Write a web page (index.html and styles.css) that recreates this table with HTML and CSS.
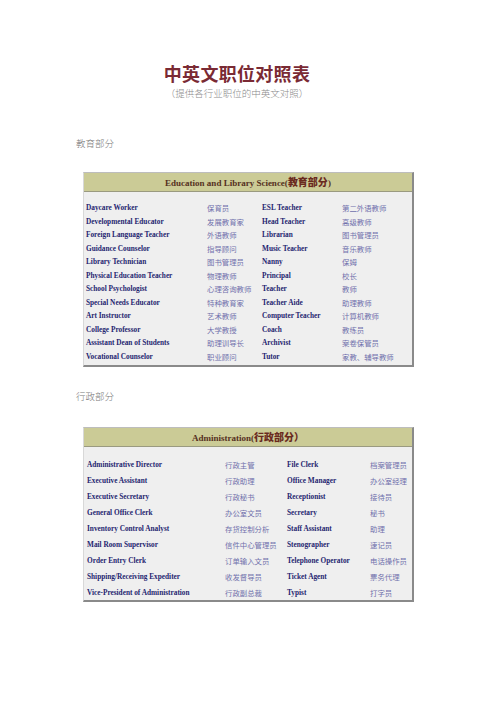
FILE: index.html
```html
<!DOCTYPE html>
<html lang="zh">
<head>
<meta charset="utf-8">
<title>中英文职位对照表</title>
<link rel="stylesheet" href="styles.css">
</head>
<body>
<div class="page">
  <h1 class="title">中英文职位对照表</h1>
  <p class="subtitle">（提供各行业职位的中英文对照）</p>

  <p class="section">教育部分</p>
  <div class="table t1">
    <div class="thead">Education and Library Science(<span class="cn-h">教育部分</span>)</div>
    <div class="tbody">
      <span class="en">Daycare Worker</span><span class="cn">保育员</span><span class="en">ESL Teacher</span><span class="cn">第二外语教师</span>
      <span class="en">Developmental Educator</span><span class="cn">发展教育家</span><span class="en">Head Teacher</span><span class="cn">高级教师</span>
      <span class="en">Foreign Language Teacher</span><span class="cn">外语教师</span><span class="en">Librarian</span><span class="cn">图书管理员</span>
      <span class="en">Guidance Counselor</span><span class="cn">指导顾问</span><span class="en">Music Teacher</span><span class="cn">音乐教师</span>
      <span class="en">Library Technician</span><span class="cn">图书管理员</span><span class="en">Nanny</span><span class="cn">保姆</span>
      <span class="en">Physical Education Teacher</span><span class="cn">物理教师</span><span class="en">Principal</span><span class="cn">校长</span>
      <span class="en">School Psychologist</span><span class="cn">心理咨询教师</span><span class="en">Teacher</span><span class="cn">教师</span>
      <span class="en">Special Needs Educator</span><span class="cn">特种教育家</span><span class="en">Teacher Aide</span><span class="cn">助理教师</span>
      <span class="en">Art Instructor</span><span class="cn">艺术教师</span><span class="en">Computer Teacher</span><span class="cn">计算机教师</span>
      <span class="en">College Professor</span><span class="cn">大学教授</span><span class="en">Coach</span><span class="cn">教练员</span>
      <span class="en">Assistant Dean of Students</span><span class="cn">助理训导长</span><span class="en">Archivist</span><span class="cn">案卷保管员</span>
      <span class="en">Vocational Counselor</span><span class="cn">职业顾问</span><span class="en">Tutor</span><span class="cn">家教、辅导教师</span>
    </div>
  </div>

  <p class="section sec2">行政部分</p>
  <div class="table t2">
    <div class="thead">Administration(<span class="cn-h">行政部分）</span></div>
    <div class="tbody">
      <span class="en">Administrative Director</span><span class="cn">行政主管</span><span class="en">File Clerk</span><span class="cn">档案管理员</span>
      <span class="en">Executive Assistant</span><span class="cn">行政助理</span><span class="en">Office Manager</span><span class="cn">办公室经理</span>
      <span class="en">Executive Secretary</span><span class="cn">行政秘书</span><span class="en">Receptionist</span><span class="cn">接待员</span>
      <span class="en">General Office Clerk</span><span class="cn">办公室文员</span><span class="en">Secretary</span><span class="cn">秘书</span>
      <span class="en">Inventory Control Analyst</span><span class="cn">存货控制分析</span><span class="en">Staff Assistant</span><span class="cn">助理</span>
      <span class="en">Mail Room Supervisor</span><span class="cn">信件中心管理员</span><span class="en">Stenographer</span><span class="cn">速记员</span>
      <span class="en">Order Entry Clerk</span><span class="cn">订单输入文员</span><span class="en">Telephone Operator</span><span class="cn">电话操作员</span>
      <span class="en">Shipping/Receiving Expediter</span><span class="cn">收发督导员</span><span class="en">Ticket Agent</span><span class="cn">票务代理</span>
      <span class="en">Vice-President of Administration</span><span class="cn">行政副总裁</span><span class="en">Typist</span><span class="cn">打字员</span>
    </div>
  </div>
</div>
</body>
</html>
```

FILE: styles.css
```css
html, body {
  margin: 0;
  padding: 0;
  background: #ffffff;
}
body {
  font-family: "Liberation Serif", "Noto Sans CJK SC", serif;
}
.page {
  width: 496px;
  padding-top: 63px;
}
.title {
  margin: 0;
  padding-right: 22px;
  text-align: center;
  font-family: "Noto Sans CJK SC", sans-serif;
  font-weight: 700;
  font-size: 18px;
  line-height: 20px;
  color: #7a2a34;
  letter-spacing: 0.3px;
}
.subtitle {
  margin: 4px 0 0;
  padding-right: 22px;
  text-align: center;
  font-family: "Noto Sans CJK SC", sans-serif;
  font-weight: 300;
  font-size: 9.5px;
  line-height: 12px;
  color: #8a8a8a;
}
.section {
  margin: 38px 0 0 76px;
  font-family: "Noto Sans CJK SC", sans-serif;
  font-weight: 300;
  font-size: 9.5px;
  line-height: 12px;
  color: #777777;
}
.sec2 {
  margin-top: 23px;
}
.table {
  margin: 23px 0 0 83px;
  width: 331px;
  box-sizing: border-box;
  border-top: 1px solid #bdbdbd;
  border-left: 1px solid #d8d8d8;
  border-right: 2px solid #8a8a8a;
  border-bottom: 2px solid #8a8a8a;
  background: #efefef;
}
.t2 {
  margin-top: 25px;
}
.thead {
  height: 18px;
  line-height: 18px;
  background: #cbcb96;
  border-bottom: 1px solid #9a9a80;
  text-align: center;
  font-family: "Liberation Serif", serif;
  font-weight: 700;
  font-size: 9px;
  color: #55301e;
}
.cn-h {
  font-family: "Noto Sans CJK SC", sans-serif;
  font-weight: 900;
  font-size: 10px;
  color: #6a2a1e;
}
.tbody {
  display: grid;
  padding: 9px 0 2px 2px;
}
.t1 .tbody {
  grid-template-columns: 121px 55px 80px 1fr;
  grid-auto-rows: 13.5px;
}
.t2 .tbody {
  grid-template-columns: 138px 62px 83px 1fr;
  grid-auto-rows: 16px;
  padding: 9px 0 0 3px;
}
.en {
  font-family: "Liberation Serif", serif;
  font-weight: 700;
  font-size: 7.3px;
  color: #25256f;
  white-space: nowrap;
  display: flex;
  align-items: center;
}
.cn {
  font-family: "Noto Sans CJK SC", sans-serif;
  font-weight: 400;
  font-size: 7.4px;
  color: #7070ac;
  white-space: nowrap;
  display: flex;
  align-items: center;
}
```
